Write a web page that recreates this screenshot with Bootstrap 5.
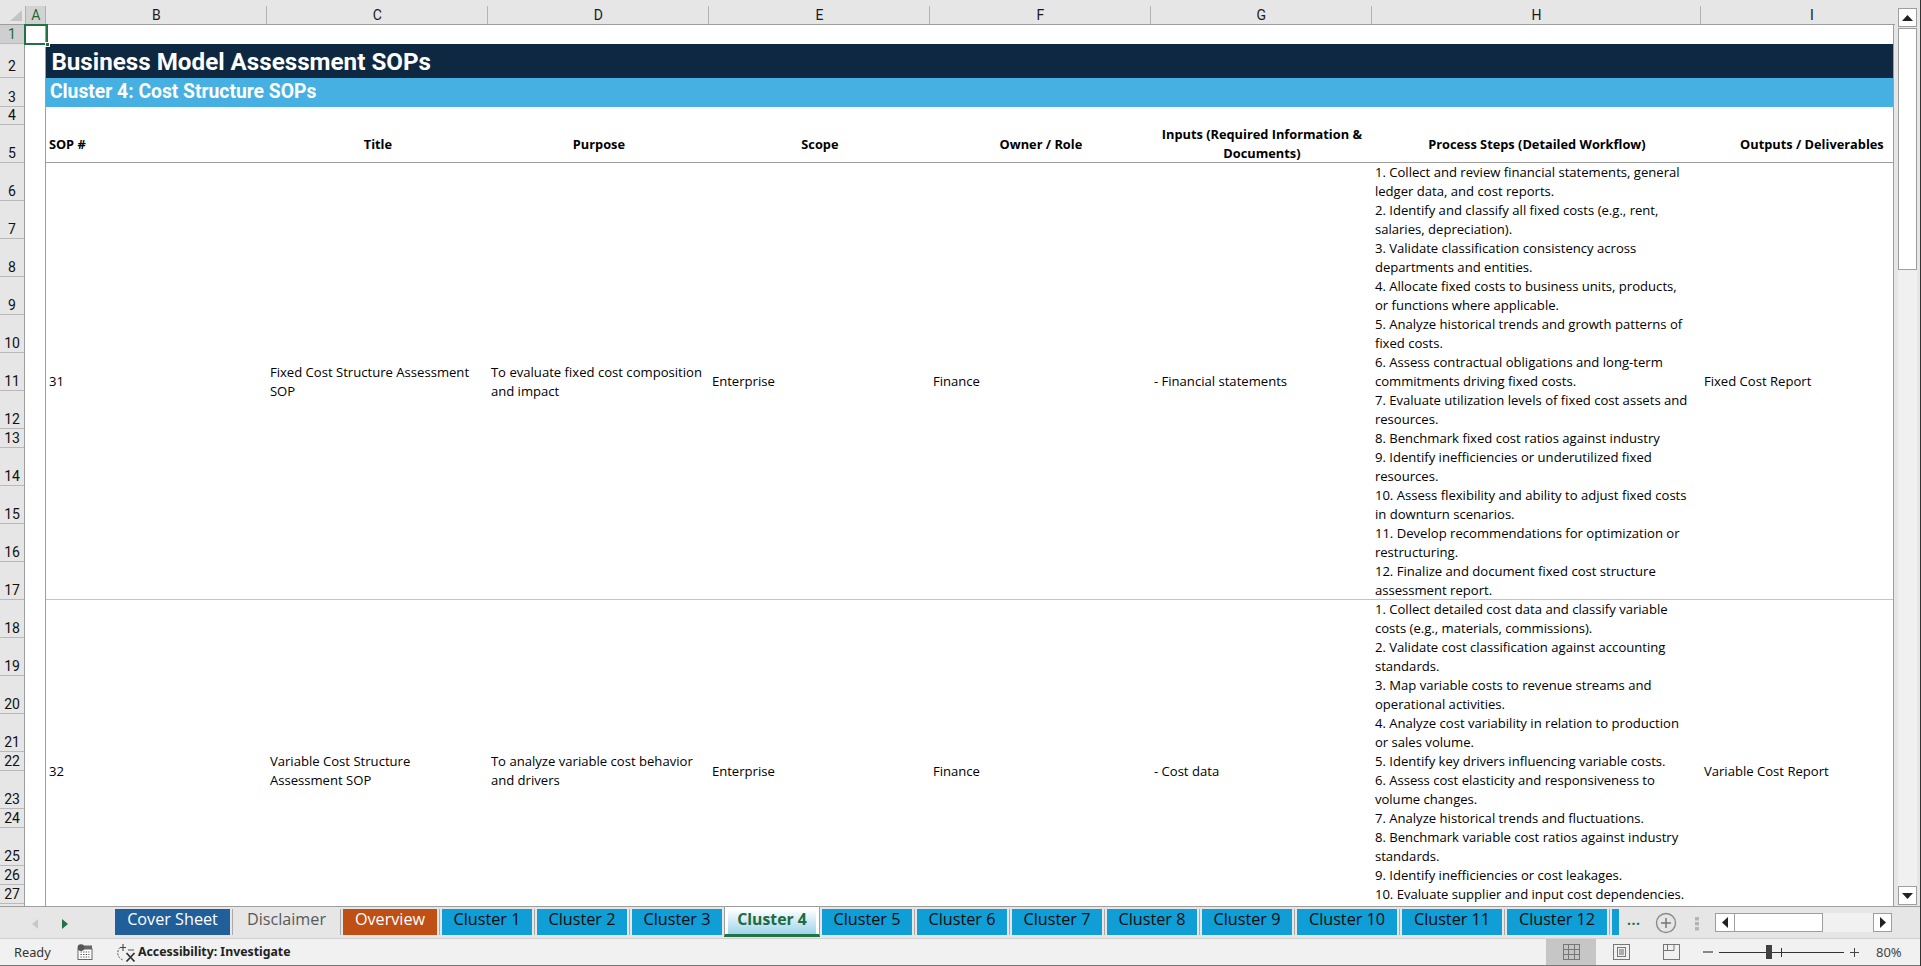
<!DOCTYPE html>
<html lang="en">
<head>
<meta charset="utf-8">
<title>Business Model Assessment SOPs</title>
<link href="https://cdn.jsdelivr.net/npm/bootstrap@5.3.0/dist/css/bootstrap.min.css" rel="stylesheet">
<style>
html,body{height:966px;overflow:hidden;background:#e6e6e6}
.xl-app{width:1921px;height:966px;border-right:1px solid #333;font-family:"Liberation Sans",sans-serif;color:#000}
.xl-top{height:906px}
.xl-main{width:1895px;position:relative}
.xl-vbar{width:25px;padding:8px 3px 0 3px;background:#e6e6e6}
.vb-btn{height:19px;background:#fff;border:1px solid #9e9e9e;margin-bottom:1px}
.vb-thumb{height:242px;background:#fff;border:1px solid #9e9e9e}
.vb-track{height:616px;background:#f0f0f0}
.vb-btn-b{height:19px;background:#fff;border:1px solid #9e9e9e}
.col-head{height:25.3px;padding-top:6px;border-bottom:1px solid #9e9e9e;background:#e6e6e6;font:14px/19px Roboto,sans-serif;color:#1a1a1a}
.corner{width:25px;flex:none;position:relative}
.corner svg{position:absolute;left:0;top:-6px}
.ch-a{width:21.4px;flex:none;background:#d2d2d2;color:#1d6b41;text-align:center;border-right:1px solid #b0b0b0;border-left:1px solid #b0b0b0}
.ch{width:221px;text-align:center;border-right:1px solid #b4b4b4;flex:none}
.ch-h{width:329px}
.ch-i{border-right:0}
.xl-body{height:calc(906px - 25.3px);overflow:hidden}
.row-head{width:25px;flex:none;background:#e6e6e6;border-right:1px solid #9e9e9e;font:14px/17px Roboto,sans-serif;text-align:center;color:#111}
.rn{display:flex;align-items:flex-end;justify-content:center;border-bottom:1px solid #b9b9b9;height:38px}
.rn-s{height:19px}
.rn-1{height:19px;background:#cfcfcf;color:#1d6b41}
.rn-2{height:34px;padding-bottom:2px}
.rn-3{height:28.5px}
.rn-4{height:18.5px}
.col-a{width:21.4px;flex:none;background:#fff;border-right:1px solid #9e9e9e}
.grid-wrap{width:1847.6px;flex:none;overflow:hidden;background:#fff;border-right:1px solid #9e9e9e}
.sheet-table.table{table-layout:fixed;width:1847px;font:13.1px/19px "Open Sans",sans-serif;color:#000;background:#fff;--bs-table-bg:transparent}
.sheet-table.table>:not(caption)>*>*{padding:0 2.5px;vertical-align:middle;background-color:transparent;box-shadow:none;border:0;color:inherit}
.cw{width:221px}
.cw-h{width:329px}
.sr-1{height:19px}
.sr-4{height:18.5px}
.sheet-table.table>tbody>tr.sr-2>td{height:34px;background-color:#0e2841;color:#fff;font:700 24.2px/30px Roboto,sans-serif;padding:3px 0 1px 5px}
.sheet-table.table>tbody>tr.sr-3>td{height:28.5px;background-color:#45b0e1;color:#fff;font:700 19.3px/26px Roboto,sans-serif;padding:0 0 1px 3.5px}
.sr-h{height:38px}
.sheet-table.table>tbody>tr.sr-h>td{background:linear-gradient(#9e9e9e,#9e9e9e) bottom/100% 1px no-repeat;text-align:center;font-weight:700;font-size:12.8px}
.sheet-table.table>tbody>tr.sr-h>td.tl{text-align:left}
.sheet-table.table>tbody>tr.sr-d>td{background:linear-gradient(#c4c4c4,#c4c4c4) bottom/100% 1px no-repeat;white-space:nowrap}
.sr-tall{height:342px}
.sheet-table.table>tbody>tr.sr-d>td.steps-top{vertical-align:top}
.sel-box{position:absolute;left:24px;top:24px;width:24px;height:21px;border:2px solid #217346;pointer-events:none}
.sel-box::after{content:"";position:absolute;right:-4px;bottom:-4px;width:5px;height:5px;background:#217346;border:1px solid #fff}
.tabbar{height:33px;background:#e6e6e6;border-top:1px solid #9e9e9e;border-bottom:1px solid #d0d0d0;position:relative}
.tab-nav{width:115px;flex:none;position:relative}
.tab-nav svg{position:absolute;left:28px;top:10px}
.tab-list{width:1504px;flex:none;overflow:hidden;gap:5px;padding-top:2px;height:30px}
.xtab{flex:none;height:26px;width:90px;text-align:center;font:16.2px/20px "Open Sans",sans-serif;color:#0c0c0c;background:#0f9ed5;position:relative;white-space:nowrap}
.xtab::before{content:"";position:absolute;left:-3px;top:0;height:26px;width:1px;background:#ababab}
.t-cover{width:115px;background:#215f9a;color:#fff}
.t-disc{width:103px;background:transparent;color:#595959}
.t-over{width:94px;background:#c04f15;color:#fff}
.t-10{width:100px}
.t-last{width:7px}
.t-act{width:96px;margin:-3px -3px 0 -3px;height:31px;background:#fff;padding:3px 3px 0 3px;color:#1d6b41;font-weight:700;border-left:1px solid #9e9e9e;border-right:1px solid #9e9e9e;border-bottom:3px solid #217346;line-height:20px}
.t-act::before{display:none}
.t-grad{display:block;height:25px;background:linear-gradient(#fff,#9dd4ec);font-size:15.8px}
.t-next::before{display:none}
.tab-tools{width:272px;flex:none;position:relative}
.more{color:#217346;font:700 14px/1 "Open Sans",sans-serif;position:absolute;left:8px;top:6px;letter-spacing:.5px}
.tool-svg{position:absolute;left:0;top:0}
.hb{position:absolute;top:6px;height:19px;background:#fff;border:1px solid #9e9e9e}
.hb-l{left:96px;width:20px}
.hb-t{left:115px;width:89px}
.hb-track{position:absolute;left:204px;width:51px;top:6px;height:19px;background:#f1f1f1}
.hb-r{left:254px;width:19px}
.statusbar{height:27px;background:#f1f1f1;border-bottom:1px solid #777;font:12.8px/26px "Noto Sans",sans-serif;color:#333;position:relative}
.st-ready{margin-left:14px;width:63px;flex:none}
.st-ico{width:24px;flex:none;padding-top:5px;line-height:0}
.st-acc{width:22px;flex:none;margin-left:15px;padding-top:4px;line-height:0}
.st-acc-t{font-weight:700;color:#222;flex:none;font-size:12.3px}
.st-right{margin-left:auto;width:374px;flex:none;position:relative;height:26px}
.vw-on{position:absolute;left:0;top:0;width:50px;height:26px;background:#c6c6c6}
.st-svg{position:absolute;left:0;top:0}
.pct{position:absolute;left:330px;top:0;font-size:13px;color:#444}
</style>
</head>
<body class="m-0">
<div class="xl-app d-flex flex-column">
  <div class="xl-top d-flex">
    <div class="xl-main d-flex flex-column">
      <div class="col-head d-flex flex-nowrap">
        <div class="corner"><svg width="25" height="25"><polygon points="10,21 22,10 22,21" fill="#c4c4c4"/></svg></div>
        <div class="ch-a">A</div>
        <div class="ch">B</div><div class="ch">C</div><div class="ch">D</div><div class="ch">E</div><div class="ch">F</div><div class="ch">G</div>
        <div class="ch ch-h">H</div><div class="ch ch-i">I</div>
      </div>
      <div class="xl-body d-flex">
        <div class="row-head">
          <div class="rn rn-1">1</div><div class="rn rn-2">2</div><div class="rn rn-3">3</div><div class="rn rn-4">4</div><div class="rn">5</div>
          <div class="rn">6</div><div class="rn">7</div><div class="rn">8</div><div class="rn">9</div><div class="rn">10</div><div class="rn">11</div>
          <div class="rn">12</div><div class="rn rn-s">13</div><div class="rn">14</div><div class="rn">15</div><div class="rn">16</div><div class="rn">17</div>
          <div class="rn">18</div><div class="rn">19</div><div class="rn">20</div><div class="rn">21</div><div class="rn rn-s">22</div><div class="rn">23</div>
          <div class="rn rn-s">24</div><div class="rn">25</div><div class="rn rn-s">26</div><div class="rn rn-s">27</div>
        </div>
        <div class="col-a"></div>
        <div class="grid-wrap">
          <table class="table table-borderless m-0 sheet-table">
            <colgroup><col class="cw"><col class="cw"><col class="cw"><col class="cw"><col class="cw"><col class="cw"><col class="cw-h"><col class="cw"></colgroup>
            <tbody>
              <tr class="sr-1"><td colspan="8"></td></tr>
              <tr class="sr-2"><td colspan="8">Business Model Assessment SOPs</td></tr>
              <tr class="sr-3"><td colspan="8">Cluster 4: Cost Structure SOPs</td></tr>
              <tr class="sr-4"><td colspan="8"></td></tr>
              <tr class="sr-h"><td class="tl">SOP #</td><td>Title</td><td>Purpose</td><td>Scope</td><td>Owner / Role</td><td>Inputs (Required Information &amp;<br>Documents)</td><td>Process Steps (Detailed Workflow)</td><td>Outputs / Deliverables</td></tr>
              <tr class="sr-d">
                <td>31</td><td>Fixed Cost Structure Assessment<br>SOP</td><td>To evaluate fixed cost composition<br>and impact</td><td>Enterprise</td><td>Finance</td><td>- Financial statements</td>
                <td>1. Collect and review financial statements, general<br>ledger data, and cost reports.<br>2. Identify and classify all fixed costs (e.g., rent,<br>salaries, depreciation).<br>3. Validate classification consistency across<br>departments and entities.<br>4. Allocate fixed costs to business units, products,<br>or functions where applicable.<br>5. Analyze historical trends and growth patterns of<br>fixed costs.<br>6. Assess contractual obligations and long-term<br>commitments driving fixed costs.<br>7. Evaluate utilization levels of fixed cost assets and<br>resources.<br>8. Benchmark fixed cost ratios against industry<br>9. Identify inefficiencies or underutilized fixed<br>resources.<br>10. Assess flexibility and ability to adjust fixed costs<br>in downturn scenarios.<br>11. Develop recommendations for optimization or<br>restructuring.<br>12. Finalize and document fixed cost structure<br>assessment report.</td>
                <td>Fixed Cost Report</td>
              </tr>
              <tr class="sr-d sr-tall">
                <td>32</td><td>Variable Cost Structure<br>Assessment SOP</td><td>To analyze variable cost behavior<br>and drivers</td><td>Enterprise</td><td>Finance</td><td>- Cost data</td>
                <td class="steps-top">1. Collect detailed cost data and classify variable<br>costs (e.g., materials, commissions).<br>2. Validate cost classification against accounting<br>standards.<br>3. Map variable costs to revenue streams and<br>operational activities.<br>4. Analyze cost variability in relation to production<br>or sales volume.<br>5. Identify key drivers influencing variable costs.<br>6. Assess cost elasticity and responsiveness to<br>volume changes.<br>7. Analyze historical trends and fluctuations.<br>8. Benchmark variable cost ratios against industry<br>standards.<br>9. Identify inefficiencies or cost leakages.<br>10. Evaluate supplier and input cost dependencies.</td>
                <td>Variable Cost Report</td>
              </tr>
            </tbody>
          </table>
        </div>
      </div>
      <div class="sel-box"></div>
    </div>
    <div class="xl-vbar d-flex flex-column">
      <div class="vb-btn d-flex align-items-center justify-content-center"><svg width="11" height="6"><polygon points="0,6 5.5,0 11,6" fill="#222"/></svg></div>
      <div class="vb-thumb"></div>
      <div class="vb-track"></div>
      <div class="vb-btn-b d-flex align-items-center justify-content-center"><svg width="11" height="6"><polygon points="0,0 5.5,6 11,0" fill="#222"/></svg></div>
    </div>
  </div>
  <div class="tabbar d-flex">
    <div class="tab-nav"><svg width="60" height="14"><polygon points="10,2 4,7 10,12" fill="#c8c8c8"/><polygon points="34,2 40,7 34,12" fill="#217346"/></svg></div>
    <div class="tab-list d-flex">
      <div class="xtab t-cover">Cover Sheet</div>
      <div class="xtab t-disc">Disclaimer</div>
      <div class="xtab t-over">Overview</div>
      <div class="xtab">Cluster 1</div>
      <div class="xtab">Cluster 2</div>
      <div class="xtab">Cluster 3</div>
      <div class="xtab t-act"><span class="t-grad">Cluster 4</span></div>
      <div class="xtab t-next">Cluster 5</div>
      <div class="xtab">Cluster 6</div>
      <div class="xtab">Cluster 7</div>
      <div class="xtab">Cluster 8</div>
      <div class="xtab">Cluster 9</div>
      <div class="xtab t-10">Cluster 10</div>
      <div class="xtab t-10">Cluster 11</div>
      <div class="xtab t-10">Cluster 12</div>
      <div class="xtab t-last"></div>
    </div>
    <div class="tab-tools">
      <span class="more">...</span>
      <svg class="tool-svg" width="95" height="32"><circle cx="47" cy="16" r="9.5" fill="none" stroke="#8a8a8a" stroke-width="1.4"/><path d="M42 16h10M47 11v10" stroke="#777" stroke-width="1.5"/><rect x="76" y="10" width="4" height="3.5" fill="#b4b4b4"/><rect x="76" y="15" width="4" height="3.5" fill="#b4b4b4"/><rect x="76" y="20" width="4" height="3.5" fill="#b4b4b4"/></svg>
      <div class="hb hb-l d-flex align-items-center justify-content-center"><svg width="6" height="11"><polygon points="6,0 0,5.5 6,11" fill="#222"/></svg></div>
      <div class="hb hb-t"></div>
      <div class="hb-track"></div>
      <div class="hb hb-r d-flex align-items-center justify-content-center"><svg width="6" height="11"><polygon points="0,0 6,5.5 0,11" fill="#222"/></svg></div>
    </div>
  </div>
  <div class="statusbar d-flex">
    <div class="st-ready">Ready</div>
    <div class="st-ico"><svg width="16" height="16" viewBox="0 0 16 16"><rect x="1" y="5" width="14" height="10.5" fill="#fff" stroke="#666"/><rect x="7" y="1.5" width="8" height="3.5" fill="#666"/><circle cx="4" cy="3.6" r="3.4" fill="#555"/><path d="M3.5 8h9M3.5 10.5h9M3.5 13h9" stroke="#555" stroke-dasharray="1.4 1.2"/></svg></div>
    <div class="st-acc"><svg width="20" height="20" viewBox="0 0 20 20" fill="none"><path d="M4 4.5a7.5 7.5 0 0 0 3 12.5" stroke="#555" stroke-dasharray="2 1.2"/><path d="M7 1v7M4 4.5h6" stroke="#444" stroke-width="1.1"/><path d="M10.5 10l8 8.5M18.5 10l-8 8.5" stroke="#333" stroke-width="1.8"/><path d="M12 7h6" stroke="#555"/></svg></div>
    <div class="st-acc-t">Accessibility: Investigate</div>
    <div class="st-right">
      <div class="vw-on"></div>
      <svg class="st-svg" width="330" height="26">
        <g fill="none" stroke="#777"><rect x="17.5" y="5.5" width="16" height="15"/><path d="M22.5 5.5v15M28.5 5.5v15M17.5 10.5h16M17.5 15.5h16"/>
        <rect x="67.5" y="5.5" width="16" height="15"/><rect x="71.5" y="8.5" width="8" height="9"/><path d="M73 11h5M73 13h5M73 15h5" stroke="#666"/>
        <rect x="117.5" y="5.5" width="16" height="15"/><path d="M117.5 11.5h10.5M121.5 5.5v6M128 5.5v6"/></g>
        <path d="M157 13h10" stroke="#444" stroke-width="1.2"/>
        <path d="M173 13.5h125" stroke="#333"/>
        <rect x="220" y="6" width="6" height="14" fill="#404040"/>
        <path d="M235.5 9v9" stroke="#333"/>
        <path d="M304 13.5h9M308.5 9v9" stroke="#444"/>
      </svg>
      <span class="pct">80%</span>
    </div>
  </div>
</div>
</body>
</html>
